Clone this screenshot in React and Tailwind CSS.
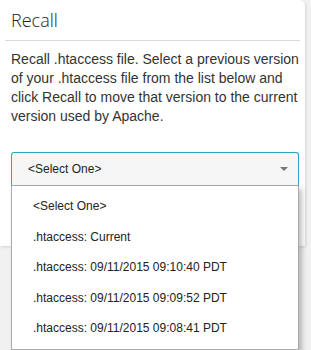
export default function App() {
  const options = [
    "<Select One>",
    ".htaccess: Current",
    ".htaccess: 09/11/2015 09:10:40 PDT",
    ".htaccess: 09/11/2015 09:09:52 PDT",
    ".htaccess: 09/11/2015 09:08:41 PDT",
  ]

  return (
    <div className="w-[311px] h-[350px] bg-[#f1f1f1] overflow-hidden" style={{ fontFamily: "'Liberation Sans', Arial, sans-serif" }}>
      <div className="relative w-[305px] h-[246px] bg-white rounded-tr-[6px] shadow-[1px_1px_3px_rgba(0,0,0,0.12)]">
        <div className="mx-[5px] h-[41px] border-b border-[#d8d8d8] px-[6px] pt-[9px]">
          <h1 className="text-[18px] leading-[22px] text-[#222] font-light" style={{ fontFamily: "'Open Sans', sans-serif" }}>Recall</h1>
        </div>
        <p className="pl-[11px] pr-[1px] pt-[9px] text-[14px] leading-[19px] text-[#333]">
          Recall .htaccess file. Select a previous version of your .htaccess file from the list below and click Recall to move that version to the current version used by Apache.
        </p>

        <div className="absolute left-[11px] top-[152px] w-[288px]">
          <div className="h-[34px] flex items-center justify-between pl-[16px] pr-[10px] bg-[#f6f6f6] border border-[#2ba6bf] border-b-[#aaa] rounded-t-[3px]">
            <span className="text-[12px] text-[#222]">&lt;Select One&gt;</span>
            <svg width="8" height="5" viewBox="0 0 8 5"><path d="M0 0 L8 0 L4 4 Z" fill="#777" /></svg>
          </div>
          <div className="bg-white border-x border-b border-[#aaa] shadow-[3px_3px_5px_rgba(0,0,0,0.25)] py-[5px]">
            {options.map((o, i) => (
              <div key={i} className="h-[30.5px] flex items-center pl-[21px] text-[12px] text-[#222]">
                {o}
              </div>
            ))}
          </div>
        </div>
      </div>
    </div>
  )
}
